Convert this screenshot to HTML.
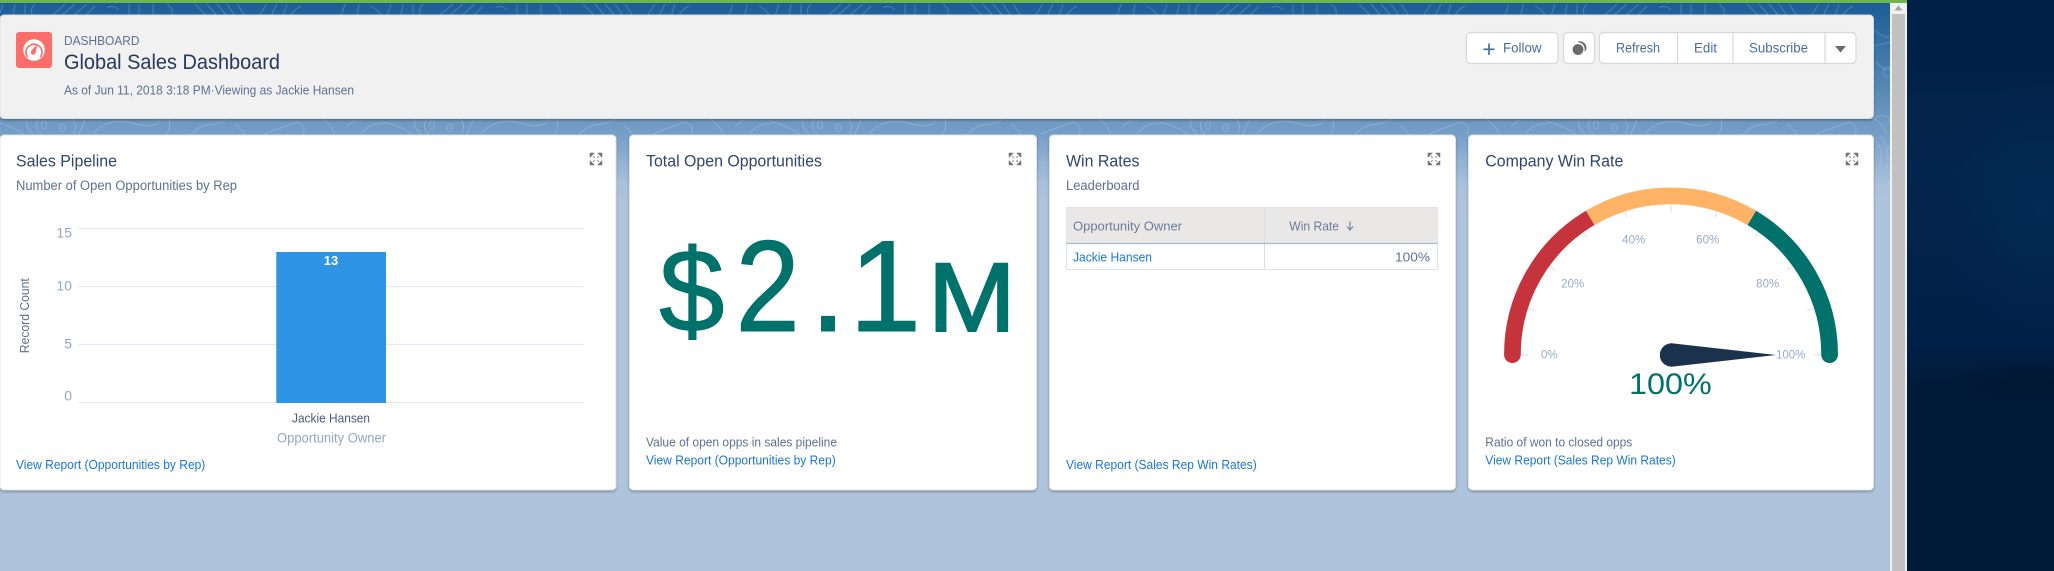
<!DOCTYPE html>
<html>
<head>
<meta charset="utf-8">
<title>Global Sales Dashboard</title>
<style>
html,body{margin:0;padding:0;width:2054px;height:571px;overflow:hidden;background:#aec3dc}
svg{display:block;position:absolute;left:0;top:0}
text{font-family:"Liberation Sans",Arial,sans-serif}
.title{font-size:17px;fill:#32456b}
.sub{font-size:13.5px;fill:#5d7193}
.link{font-size:13px;fill:#1a76d2}
.btn{font-size:13.5px;fill:#4a6ca3}
.ax{font-size:14px;fill:#93a7c1}
.gl{font-size:11.5px;fill:#98aac3;text-anchor:middle}
.big{fill:#00716b;stroke:#00716b;stroke-width:1}
</style>
</head>
<body>
<svg width="2054" height="571" viewBox="0 0 2054 571" xmlns="http://www.w3.org/2000/svg">
<defs>
<linearGradient id="bg" gradientUnits="userSpaceOnUse" x1="0" y1="3" x2="0" y2="200">
<stop offset="0" stop-color="#1e5d98"/>
<stop offset=".07" stop-color="#23639c"/>
<stop offset=".58" stop-color="#6b97c0"/>
<stop offset=".67" stop-color="#769fc7"/>
<stop offset=".92" stop-color="#a9c1dc"/>
<stop offset="1" stop-color="#aec3dc"/>
</linearGradient>
<linearGradient id="fade" gradientUnits="userSpaceOnUse" x1="0" y1="0" x2="0" y2="190">
<stop offset="0" stop-color="#fff"/>
<stop offset=".75" stop-color="#fff"/>
<stop offset="1" stop-color="#000"/>
</linearGradient>
<mask id="m"><rect x="0" y="0" width="1890" height="190" fill="url(#fade)"/></mask>
<linearGradient id="wall" x1="0" y1="0" x2="0" y2="1">
<stop offset="0" stop-color="#012045"/>
<stop offset=".3" stop-color="#02254d"/>
<stop offset=".6" stop-color="#012047"/>
<stop offset=".68" stop-color="#011a38"/>
<stop offset="1" stop-color="#011a38"/>
</linearGradient>
<radialGradient id="glow"><stop offset="0" stop-color="#03315f" stop-opacity=".45"/><stop offset="1" stop-color="#03315f" stop-opacity="0"/></radialGradient>
<radialGradient id="dark"><stop offset="0" stop-color="#000d20" stop-opacity=".3"/><stop offset="1" stop-color="#000d20" stop-opacity="0"/></radialGradient>
<pattern id="topo" patternUnits="userSpaceOnUse" x="-5" y="0" width="388" height="190">
<g fill="none" stroke="#fff" stroke-opacity=".2" stroke-width="1">
<path d="M8 4L4 16M20 4L18 16M30 4L30 16M40 4Q34 10 38 16M70 4L56 16M80 4L66 16M92 4L78 16M100 6L90 16M112 8Q118 4 124 10M134 4L134 16M144 4L144 16M158 4V16M172 4Q180 10 176 16M200 4L212 16M212 4L222 16M222 4L232 16M232 4L240 16M242 4L250 16M272 4L264 16M282 4L276 16M292 4L288 16M306 6Q298 10 296 16M350 4L346 16M364 4L362 16M376 6Q386 12 386 16"/>
<path d="M0 122Q16 125 28 134M32 118Q30 128 38 134M44 118Q38 128 46 134"/>
<ellipse cx="49" cy="125" rx="2.5" ry="4"/><ellipse cx="67" cy="128" rx="2.5" ry="4"/>
<path d="M76 118Q84 124 78 134M90 120L84 134M98 134Q112 118 134 122Q150 128 162 124L166 118M174 118Q176 126 172 134"/>
<path d="M196 134Q206 124 220 124Q228 122 234 118M240 124L250 134M270 134Q290 126 302 122Q312 126 308 134M326 118Q336 124 340 134M352 126L360 120M366 134Q376 122 388 124"/>
<path d="M0 150Q30 138 40 165M340 148Q370 160 388 150M120 150Q140 170 170 160M250 152Q280 172 310 158"/>
</g>
</pattern>
<g id="ex">
<path d="M0 0h4.4L0 4.4zM12 0v4.4L7.6 0zM0 12V7.6L4.4 12zM12 12H7.6L12 7.6z" fill="#767472" stroke="#767472" stroke-width=".5"/>
<path d="M3 3L4.8 4.8M9 3L7.2 4.8M3 9L4.8 7.2M9 9L7.2 7.2" stroke="#a09e9b" stroke-width="1.2"/>
</g>
<filter id="s" x="-2%" y="-2%" width="104%" height="105%"><feDropShadow dx="0" dy="1.5" stdDeviation="1" flood-color="#000" flood-opacity=".28"/></filter>
</defs>

<!-- desktop wallpaper -->
<rect x="1907" y="0" width="147" height="571" fill="url(#wall)"/>
<ellipse cx="2040" cy="210" rx="95" ry="130" fill="url(#glow)"/>
<ellipse cx="2030" cy="380" rx="90" ry="20" fill="url(#dark)"/>

<!-- page background -->
<rect width="1907" height="571" fill="#aec3dc"/>
<rect y="3" width="1890" height="197" fill="url(#bg)"/>
<rect x="0" y="3" width="1890" height="187" fill="url(#topo)" mask="url(#m)"/>
<g fill="none" stroke="#fff" stroke-opacity=".18" mask="url(#m)">
<path d="M1874 30Q1886 40 1890 36M1874 46L1890 42M1876 62Q1890 76 1890 66"/>
<circle cx="1888" cy="72" r="5"/>
<path d="M1874 118Q1888 112 1890 122"/>
<path d="M1874 140Q1886 150 1878 168Q1884 178 1890 180M1880 135Q1892 150 1886 170"/>
</g>
<rect x="0" y="0" width="1907" height="3" fill="#6cb650"/>

<!-- scrollbar -->
<rect x="1890" y="3" width="17" height="568" fill="#f1f1f1"/>
<rect x="1892" y="14" width="13" height="557" fill="#c1c1c1"/>
<path d="M1898.5 5.5L1902.5 10.5H1894.5z" fill="#a3a3a3"/>

<!-- page header -->
<g>
<rect x="0" y="15" width="1873.5" height="103.5" rx="4" fill="#f1f1f1" stroke="#d8dde6" filter="url(#s)"/>
<rect x="16" y="32" width="36" height="36" rx="3" fill="#fc6e6a"/>
<circle cx="34" cy="50" r="10.8" fill="#fff"/>
<path d="M27.8 57.2A8 8 0 1 1 40.2 57.2" fill="none" stroke="#fc6e6a" stroke-width="1.6"/>
<path d="M37.4 43.6L35.6 52.4A2.4 2.4 0 1 1 31.4 50.6z" fill="#fc6e6a"/>
<text x="64" y="45" font-size="12.5" fill="#5d7193" textLength="75.5" lengthAdjust="spacingAndGlyphs">DASHBOARD</text>
<text x="64" y="69" font-size="21" fill="#26385e" textLength="216" lengthAdjust="spacingAndGlyphs">Global Sales Dashboard</text>
<text x="64" y="94.3" font-size="13" fill="#5d7193" textLength="290" lengthAdjust="spacingAndGlyphs">As of Jun 11, 2018 3:18 PM·Viewing as Jackie Hansen</text>

<rect x="1466.5" y="32.5" width="91.5" height="31" rx="4" fill="#fff" stroke="#d8d8d8" stroke-width="1.2"/>
<path d="M1489 43.5v11.5M1483.5 49.3h11" stroke="#46689c" stroke-width="1.6" fill="none"/>
<text x="1503" y="52.3" class="btn" textLength="38.5" lengthAdjust="spacingAndGlyphs">Follow</text>

<rect x="1563.5" y="32.5" width="31" height="31" rx="4" fill="#fff" stroke="#d8d8d8" stroke-width="1.2"/>
<path d="M1578 41.8A6.6 6.6 0 0 1 1586 49.5L1585 50.5A7.5 7.5 0 0 0 1578 41.8z" fill="#6b6a68" stroke="#6b6a68" stroke-width=".8"/>
<circle cx="1578" cy="49.5" r="5.8" fill="#6b6a68" stroke="#fff" stroke-width=".8"/>
<rect x="1599.5" y="32.5" width="256.5" height="31" rx="4" fill="#fff" stroke="#d8d8d8" stroke-width="1.2"/>
<path d="M1677.5 33v30M1733 33v30M1825 33v30" stroke="#d8d8d8" stroke-width="1.2"/>
<text x="1616" y="52.3" class="btn" textLength="44" lengthAdjust="spacingAndGlyphs">Refresh</text>
<text x="1694" y="52.3" class="btn" textLength="23" lengthAdjust="spacingAndGlyphs">Edit</text>
<text x="1749" y="52.3" class="btn" textLength="59" lengthAdjust="spacingAndGlyphs">Subscribe</text>
<path d="M1835 46h11l-5.5 6.5z" fill="#6b6a68"/>
</g>

<!-- card 1 -->
<g>
<rect x="0" y="135" width="616" height="355" rx="4" fill="#fff" stroke="#dfe3ea" filter="url(#s)"/>
<text x="16" y="166.5" class="title" textLength="101" lengthAdjust="spacingAndGlyphs">Sales Pipeline</text>
<text x="16" y="190" class="sub" textLength="221" lengthAdjust="spacingAndGlyphs">Number of Open Opportunities by Rep</text>
<use href="#ex" x="590" y="153"/>
<path d="M78.5 228.5H584.5M78.5 286.5H584.5M78.5 344.5H584.5M78.5 402.5H584.5" stroke="#e3e9f1" stroke-width="1.2"/>
<text x="72" y="237.5" class="ax" text-anchor="end">15</text>
<text x="72" y="290.7" class="ax" text-anchor="end">10</text>
<text x="72" y="348.7" class="ax" text-anchor="end">5</text>
<text x="72" y="400.5" class="ax" text-anchor="end">0</text>
<text transform="translate(29,315.7) rotate(-90)" font-size="12.5" fill="#5f6f8a" text-anchor="middle" textLength="75" lengthAdjust="spacingAndGlyphs">Record Count</text>
<rect x="276.3" y="252" width="109.7" height="151" fill="#3094e4"/>
<text x="331" y="265" font-size="13" fill="#fff" text-anchor="middle" font-weight="bold">13</text>
<text x="292" y="422.3" font-size="13" fill="#4b5b75" textLength="78" lengthAdjust="spacingAndGlyphs">Jackie Hansen</text>
<text x="277" y="442.3" font-size="13.5" fill="#93a7c1" textLength="109" lengthAdjust="spacingAndGlyphs">Opportunity Owner</text>
<text x="16" y="468.8" class="link" textLength="189.3" lengthAdjust="spacingAndGlyphs">View Report (Opportunities by Rep)</text>
</g>

<!-- card 2 -->
<g>
<rect x="629.5" y="135" width="407" height="355" rx="4" fill="#fff" stroke="#dfe3ea" filter="url(#s)"/>
<text x="646" y="166.5" class="title" textLength="176" lengthAdjust="spacingAndGlyphs">Total Open Opportunities</text>
<use href="#ex" x="1009" y="153"/>
<text x="659" y="331.7" class="big" font-size="118">$</text>
<text transform="translate(735.5,331) scale(.89,1)" class="big" font-size="130">2</text>
<text x="809" y="331" class="big" font-size="137">.</text>
<text x="849" y="331" class="big" font-size="130">1</text>
<text transform="translate(928,331) scale(1.08,1)" class="big" style="stroke-width:2" font-size="97.5">M</text>
<text x="646" y="446.3" font-size="13" fill="#5d7193" textLength="191" lengthAdjust="spacingAndGlyphs">Value of open opps in sales pipeline</text>
<text x="646" y="464.3" class="link" textLength="189.7" lengthAdjust="spacingAndGlyphs">View Report (Opportunities by Rep)</text>
</g>

<!-- card 3 -->
<g>
<rect x="1049.5" y="135" width="406" height="355" rx="4" fill="#fff" stroke="#dfe3ea" filter="url(#s)"/>
<text x="1066" y="166.5" class="title" textLength="73.5" lengthAdjust="spacingAndGlyphs">Win Rates</text>
<text x="1066" y="190" class="sub" textLength="73.5" lengthAdjust="spacingAndGlyphs">Leaderboard</text>
<use href="#ex" x="1428" y="153"/>
<rect x="1066.5" y="207.5" width="371" height="36" fill="#eae8e6"/>
<rect x="1066.5" y="207.5" width="371" height="62" fill="none" stroke="#dde3ec" stroke-width="1"/>
<path d="M1264.5 207.5V269.5" stroke="#d5dfea" stroke-width="1"/>
<path d="M1066.5 243.5H1437.5" stroke="#a9b9cc" stroke-width="1.2"/>
<text x="1073" y="230.3" font-size="13" fill="#6b7c99" textLength="109" lengthAdjust="spacingAndGlyphs">Opportunity Owner</text>
<text x="1289.3" y="230.3" font-size="13" fill="#6b7c99" textLength="49.7" lengthAdjust="spacingAndGlyphs">Win Rate</text>
<path d="M1350 221.5V229.5M1347 226.5L1350 230L1353 226.5" fill="none" stroke="#7a8ba8" stroke-width="1.3"/>
<text x="1073" y="261.3" font-size="13" fill="#1a76d2" textLength="79" lengthAdjust="spacingAndGlyphs">Jackie Hansen</text>
<text x="1395" y="261.3" font-size="13" fill="#5d7193" textLength="35" lengthAdjust="spacingAndGlyphs">100%</text>
<text x="1066" y="468.8" class="link" textLength="190.7" lengthAdjust="spacingAndGlyphs">View Report (Sales Rep Win Rates)</text>
</g>

<!-- card 4 -->
<g>
<rect x="1468.5" y="135" width="405" height="355" rx="4" fill="#fff" stroke="#dfe3ea" filter="url(#s)"/>
<text x="1485.3" y="166.5" class="title" textLength="138" lengthAdjust="spacingAndGlyphs">Company Win Rate</text>
<use href="#ex" x="1846" y="153"/>
<g stroke="#e3e9f1" stroke-width="1.6">
<path d="M1520.4 354.7H1528"/>
<path d="M1527.8 308.2L1535 310.5"/>
<path d="M1549.2 265.6L1555.3 270.1"/>
<path d="M1582.6 231.2L1587 237.3"/>
<path d="M1624.5 210.3L1626.9 217.5"/>
<path d="M1671 204V211.6"/>
<path d="M1717.5 210.3L1715.1 217.5"/>
<path d="M1759.4 231.2L1755 237.3"/>
<path d="M1792.8 265.6L1786.7 270.1"/>
<path d="M1814.2 308.2L1807 310.5"/>
<path d="M1814 354.7H1821.6"/>
</g>
<g fill="none" stroke-width="16.7">
<path d="M1512.4 354.7A158.6 158.6 0 0 1 1590 218" stroke="#c5343d" stroke-linecap="round"/>
<path d="M1829.6 354.7A158.6 158.6 0 0 0 1752 218" stroke="#00716b" stroke-linecap="round"/>
<path d="M1590.2 218A158.6 158.6 0 0 1 1751.8 218" stroke="#ffb367"/>
</g>
<text x="1549.3" y="358.7" class="gl">0%</text>
<text x="1572.7" y="287.3" class="gl">20%</text>
<text x="1633.7" y="243.3" class="gl">40%</text>
<text x="1707.7" y="243.3" class="gl">60%</text>
<text x="1767.7" y="287.3" class="gl">80%</text>
<text x="1790.7" y="358.7" class="gl">100%</text>
<path d="M1671.5 343.3L1776 355L1671.5 366.7A11.7 11.7 0 0 1 1671.5 343.3z" fill="#1b324d"/>
<text x="1629" y="394" font-size="30" fill="#00716b" textLength="82.7" lengthAdjust="spacingAndGlyphs">100%</text>
<text x="1485.3" y="446.3" font-size="13" fill="#5d7193" textLength="147" lengthAdjust="spacingAndGlyphs">Ratio of won to closed opps</text>
<text x="1485.3" y="464.3" class="link" textLength="190.4" lengthAdjust="spacingAndGlyphs">View Report (Sales Rep Win Rates)</text>
</g>
</svg>
</body>
</html>
